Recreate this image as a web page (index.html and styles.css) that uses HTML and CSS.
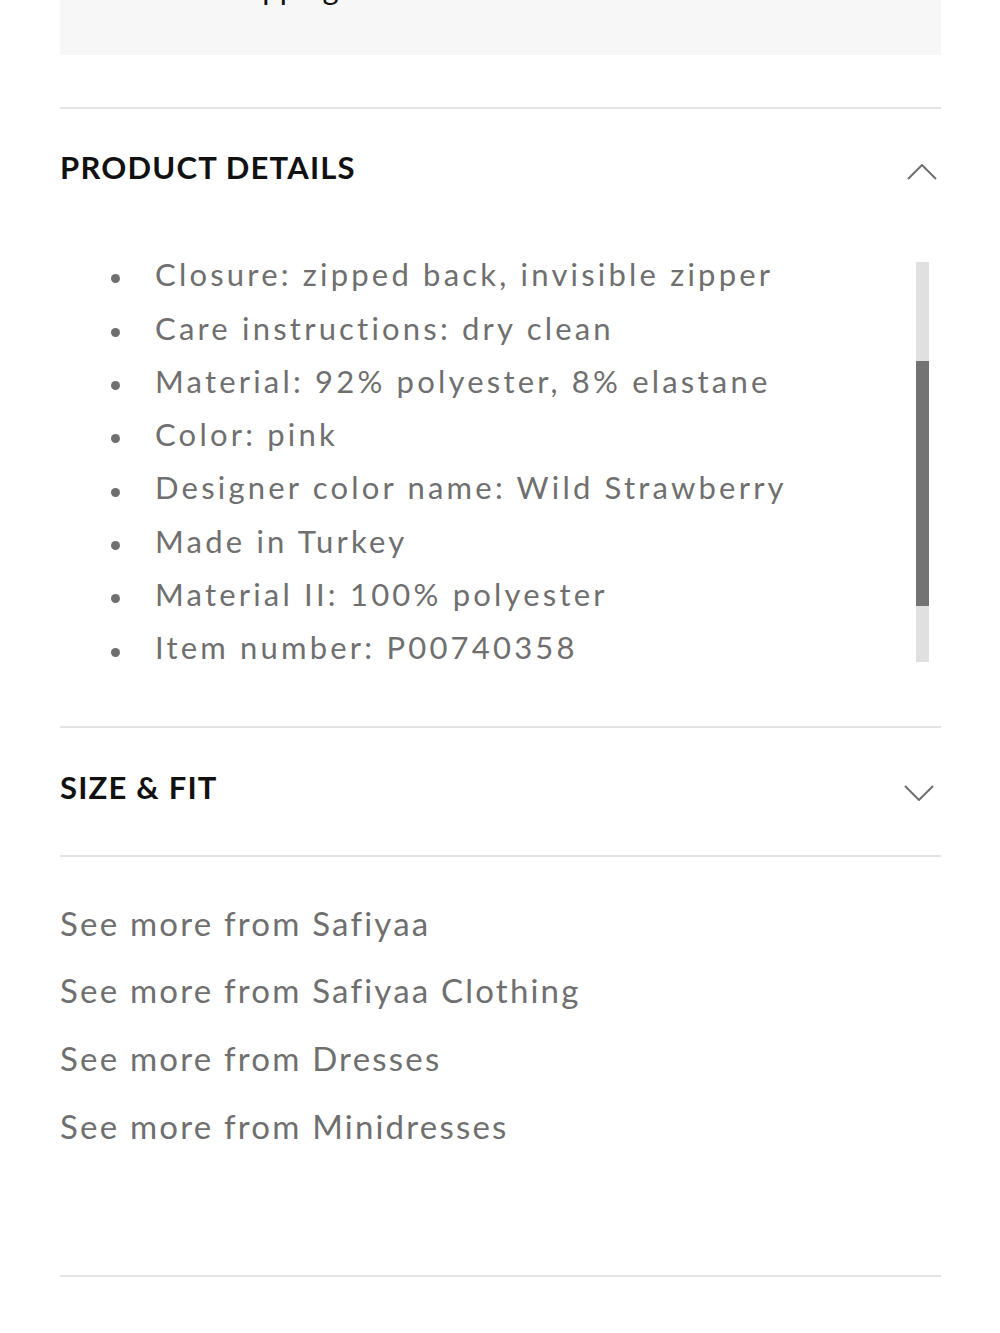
FILE: index.html
```html
<!DOCTYPE html>
<html lang="en">
<head>
<meta charset="utf-8">
<title>Product details</title>
<link rel="stylesheet" href="styles.css">
</head>
<body>
<main class="page">
  <section class="notice">
    <ul class="notice-list">
      <li>Free shipping on orders over 300 EUR</li>
    </ul>
  </section>

  <section class="accordion open">
    <header class="acc-head">
      <h2 class="acc-title">PRODUCT DETAILS</h2>
      <svg class="chev chev-up" width="30" height="16" viewBox="0 0 30 16" aria-hidden="true">
        <polyline points="1,15 15,1 29,15" fill="none" stroke="#6f6f6f" stroke-width="2"/>
      </svg>
    </header>
    <div class="acc-body">
      <ul class="details">
        <li>Closure: zipped back, invisible zipper</li>
        <li>Care instructions: dry clean</li>
        <li>Material: 92% polyester, 8% elastane</li>
        <li>Color: pink</li>
        <li>Designer color name: Wild Strawberry</li>
        <li>Made in Turkey</li>
        <li>Material II: 100% polyester</li>
        <li>Item number: P00740358</li>
      </ul>
      <div class="scrollbar"><div class="thumb"></div></div>
    </div>
  </section>

  <section class="accordion">
    <header class="acc-head">
      <h2 class="acc-title">SIZE &amp; FIT</h2>
      <svg class="chev chev-down" width="30" height="16" viewBox="0 0 30 16" aria-hidden="true">
        <polyline points="1,1 15,15 29,1" fill="none" stroke="#6f6f6f" stroke-width="2"/>
      </svg>
    </header>
  </section>

  <nav class="more">
    <a href="#">See more from Safiyaa</a>
    <a href="#">See more from Safiyaa Clothing</a>
    <a href="#">See more from Dresses</a>
    <a href="#">See more from Minidresses</a>
  </nav>
</main>
</body>
</html>
```

FILE: styles.css
```css
html, body {
  margin: 0;
  padding: 0;
  background: #ffffff;
}

body {
  font-family: Lato, "Liberation Sans", Arial, sans-serif;
  color: #6f6f6f;
}

.page {
  width: 881px;
  margin-left: 60px;
}

/* shipping banner, partly scrolled out of view */
.notice {
  background: #f7f7f7;
  margin-top: -38px;
  padding-bottom: 40px;
}

.notice-list,
.details {
  list-style: none;
  margin: 0;
  padding: 0;
  font-size: 31px;
  line-height: 53.3px;
  letter-spacing: 3.2px;
}

.notice-list li,
.details li {
  display: flex;
  align-items: center;
  white-space: nowrap;
}

.notice-list li {
  color: #111111;
  letter-spacing: 0.2px;
}

.notice-list li::before,
.details li::before {
  content: "";
  flex: none;
  width: 9px;
  height: 9px;
  border-radius: 50%;
  background: currentColor;
  margin: 8px 35px 0 51px;
}

/* accordion */
.accordion {
  border-top: 2px solid #e3e3e3;
}

.notice + .accordion {
  margin-top: 52px;
}

.acc-head {
  display: flex;
  align-items: center;
  justify-content: space-between;
  box-sizing: border-box;
}

.open .acc-head {
  height: 116px;
}

.accordion:not(.open) .acc-head {
  height: 127px;
  padding-bottom: 9px;
}

.acc-title {
  margin: 0;
  font-size: 31px;
  font-weight: 700;
  letter-spacing: 1.2px;
  color: #111111;
}

.chev {
  flex: none;
  display: block;
}

.chev-up {
  margin: 10px 4px 0 0;
}

.chev-down {
  margin: 13px 7px 0 0;
}

.acc-body {
  display: flex;
  align-items: flex-start;
  padding: 23px 0 51px;
}

.details {
  flex: 1;
}

.scrollbar {
  flex: none;
  width: 13px;
  height: 400px;
  margin: 14px 12px 0 0;
  background: #e0e0e0;
}

.thumb {
  height: 245px;
  margin-top: 99px;
  background: #737373;
}

/* related links */
.more {
  display: flex;
  flex-direction: column;
  border-top: 2px solid #e3e3e3;
  border-bottom: 2px solid #e3e3e3;
  padding: 33px 0 115px;
}

.more a {
  color: #6f6f6f;
  text-decoration: none;
  font-size: 33px;
  line-height: 67.7px;
  letter-spacing: 2.2px;
  white-space: nowrap;
}
```
